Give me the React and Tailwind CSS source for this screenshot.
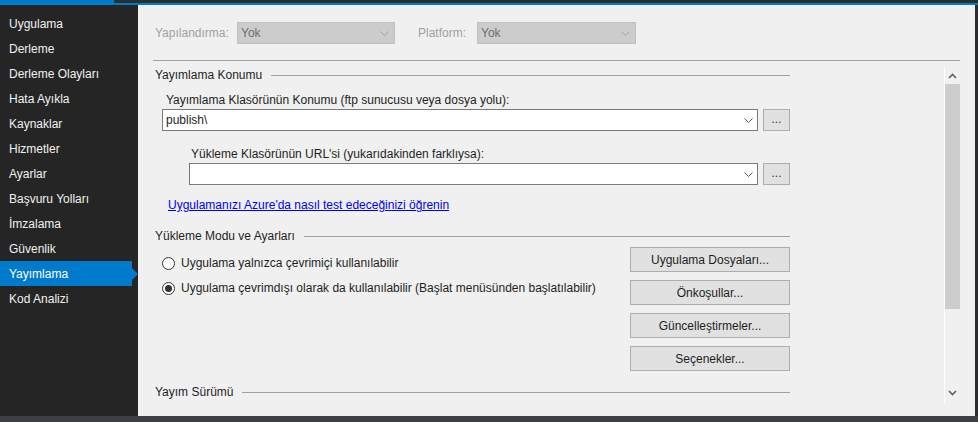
import React from "react";

const navItems = [
  "Uygulama",
  "Derleme",
  "Derleme Olayları",
  "Hata Ayıkla",
  "Kaynaklar",
  "Hizmetler",
  "Ayarlar",
  "Başvuru Yolları",
  "İmzalama",
  "Güvenlik",
  "Yayımlama",
  "Kod Analizi",
];

const Chevron = ({ className }) => (
  <svg className={className} width="9" height="5" viewBox="0 0 9 5" fill="none">
    <path d="M0.5 0.5L4.5 4.5L8.5 0.5" stroke="currentColor" strokeWidth="1" />
  </svg>
);

const SectionTitle = ({ children, className = "" }) => (
  <div className={`flex items-center h-[16px] w-[635px] ${className}`}>
    <span className="whitespace-nowrap">{children}</span>
    <div className="flex-1 ml-[9px] border-t border-[#a0a0a0]" />
  </div>
);

const ComboRow = ({ value, className = "" }) => (
  <div className={`flex items-center gap-[5px] h-[22px] ${className}`}>
    <div className="flex-1 h-full bg-white border border-[#7a7a7a] flex items-center pl-[3px] pr-[4px]">
      <span className="flex-1">{value}</span>
      <Chevron className="text-[#555555]" />
    </div>
    <button className="w-[27px] h-full bg-[#e1e1e1] border border-[#adadad] flex items-center justify-center text-[#333] leading-none pb-[3px]">
      ...
    </button>
  </div>
);

const ActionButton = ({ children }) => (
  <button className="w-[160px] h-[25px] bg-[#e1e1e1] border border-[#adadad] flex items-center justify-center text-[#1e1e1e]">
    {children}
  </button>
);

const Radio = ({ checked, label, className = "" }) => (
  <div className={`flex items-center h-[16px] ${className}`}>
    <span className="w-[13px] h-[13px] rounded-full border border-[#333333] bg-white flex items-center justify-center ml-[7px]">
      {checked && <span className="w-[7px] h-[7px] rounded-full bg-[#333333]" />}
    </span>
    <span className="ml-[6px] whitespace-nowrap">{label}</span>
  </div>
);

export default function App() {
  return (
    <div
      className="w-[978px] h-[422px] flex flex-col bg-[#2d2d30] overflow-hidden text-[12px] text-[#1e1e1e]"
      style={{ fontFamily: '"Segoe UI", "Liberation Sans", Arial, sans-serif' }}
    >
      {/* tab strip */}
      <div className="flex h-[5px] shrink-0">
        <div className="w-[114px] bg-[#007acc]" />
        <div className="flex-1 bg-[#2d2d30] border-b-2 border-[#007acc]" />
      </div>

      <div className="flex flex-1 min-h-0">
        {/* sidebar */}
        <div className="w-[138px] bg-[#252526] pt-[6px] shrink-0">
          {navItems.map((item) => {
            const active = item === "Yayımlama";
            return (
              <div key={item} className="relative h-[25px] flex items-center">
                <div
                  className={`w-[132px] h-full flex items-center pl-[9px] ${
                    active ? "bg-[#007acc] text-white" : "text-[#f1f1f1]"
                  }`}
                >
                  {item}
                </div>
                {active && (
                  <div className="w-0 h-0 border-y-[6px] border-y-transparent border-l-[6px] border-l-[#007acc]" />
                )}
              </div>
            );
          })}
        </div>

        {/* content */}
        <div className="flex-1 bg-[#f0f0f0] flex flex-col pl-[15px] pr-[15px] min-w-0">
          <div className="flex items-center h-[22px] mt-[17px] shrink-0">
            <span className="text-[#a0a0a0] ml-[2px] w-[82px]">Yapılandırma:</span>
            <div className="w-[158px] h-full bg-[#cccccc] border border-[#bfbfbf] flex items-center pl-[3px] pr-[5px] text-[#6d6d6d]">
              <span className="flex-1">Yok</span>
              <Chevron className="text-[#a0a0a0]" />
            </div>
            <span className="text-[#a0a0a0] ml-[23px] w-[59px]">Platform:</span>
            <div className="w-[159px] h-full bg-[#cccccc] border border-[#bfbfbf] flex items-center pl-[3px] pr-[5px] text-[#6d6d6d]">
              <span className="flex-1">Yok</span>
              <Chevron className="text-[#a0a0a0]" />
            </div>
          </div>

          <div className="border-t border-[#a0a0a0] mt-[16px] shrink-0" />

          <div className="flex mt-[6px] h-[336px] shrink-0">
            {/* scrolling page */}
            <div className="flex-1 overflow-hidden pl-[2px]">
              <SectionTitle>Yayımlama Konumu</SectionTitle>

              <div className="w-[635px]">
                <div className="mt-[9px] h-[16px] leading-[16px] pl-[11px]">
                  Yayımlama Klasörünün Konumu (ftp sunucusu veya dosya yolu):
                </div>
                <ComboRow value="publish\" className="mt-[1px] ml-[7px]" />

                <div className="mt-[15px] h-[16px] leading-[16px] pl-[36px]">
                  Yükleme Klasörünün URL'si (yukarıdakinden farklıysa):
                </div>
                <ComboRow value="" className="mt-[1px] ml-[34px]" />

                <div className="mt-[12px] h-[16px] leading-[16px] pl-[13px]">
                  <a href="#" className="text-[#0000ff] underline">
                    Uygulamanızı Azure'da nasıl test edeceğinizi öğrenin
                  </a>
                </div>
              </div>

              <SectionTitle className="mt-[15px]">Yükleme Modu ve Ayarları</SectionTitle>

              <div className="flex w-[635px] mt-[3px]">
                <div className="flex-1 pt-[8px]">
                  <Radio label="Uygulama yalnızca çevrimiçi kullanılabilir" />
                  <Radio
                    checked
                    className="mt-[9px]"
                    label="Uygulama çevrimdışı olarak da kullanılabilir (Başlat menüsünden başlatılabilir)"
                  />
                </div>
                <div className="flex flex-col gap-[8px]">
                  <ActionButton>Uygulama Dosyaları...</ActionButton>
                  <ActionButton>Önkoşullar...</ActionButton>
                  <ActionButton>Güncelleştirmeler...</ActionButton>
                  <ActionButton>Seçenekler...</ActionButton>
                </div>
              </div>

              <SectionTitle className="mt-[13px]">Yayım Sürümü</SectionTitle>
            </div>

            {/* scrollbar */}
            <div className="w-[16px] flex flex-col border-l border-white">
              <div className="h-[17px] flex items-center justify-center text-[#606060]">
                <svg width="9" height="6" viewBox="0 0 9 6" fill="none">
                  <path d="M1 5L4.5 1.5L8 5" stroke="currentColor" strokeWidth="1.6" />
                </svg>
              </div>
              <div className="h-[225px] bg-[#cdcdcd]" />
              <div className="flex-1" />
              <div className="h-[17px] flex items-center justify-center text-[#606060] mb-[2px]">
                <svg width="9" height="6" viewBox="0 0 9 6" fill="none">
                  <path d="M1 1L4.5 4.5L8 1" stroke="currentColor" strokeWidth="1.6" />
                </svg>
              </div>
            </div>
          </div>
        </div>

        <div className="w-[3px] bg-[#2d2d30] shrink-0" />
      </div>

      <div className="h-[6px] bg-[#3f3f46] shrink-0" />
    </div>
  );
}
